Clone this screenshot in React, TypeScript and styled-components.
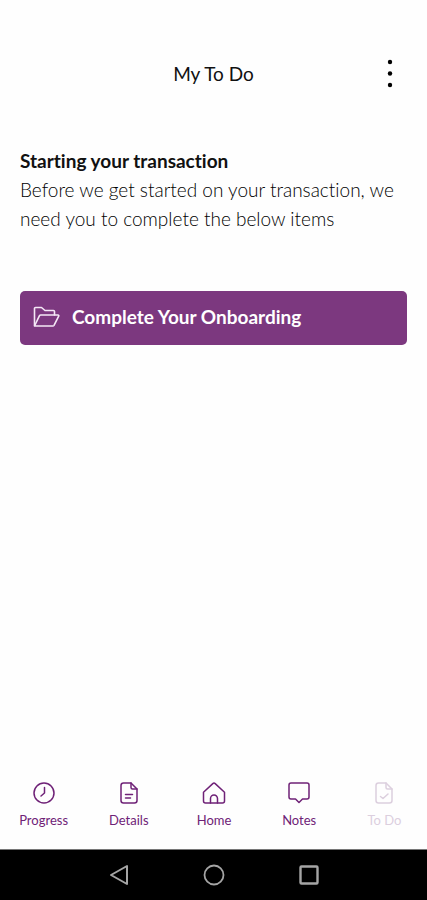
import type { ReactNode } from 'react';
import styled, { createGlobalStyle } from 'styled-components';

const GlobalStyle = createGlobalStyle`
  * { box-sizing: border-box; }
  body { margin: 0; background: #fefefe; }
  button { font: inherit; border: 0; cursor: pointer; }
`;

const Screen = styled.div`
  display: flex;
  flex-direction: column;
  min-height: 100vh;
  background: #fefefe;
  color: #111;
  font-family: Lato, sans-serif;
  font-variant-ligatures: none;
`;

const Header = styled.header`
  display: grid;
  grid-template-columns: 36px 1fr 36px;
  align-items: center;
  padding: 50px 19px 0;
`;

const Title = styled.h1`
  grid-column: 2;
  margin: 0;
  text-align: center;
  font-size: 19px;
  line-height: 48px;
  font-weight: 400;
`;

const MenuButton = styled.button`
  display: flex;
  justify-content: center;
  padding: 8px 0;
  background: none;
  color: #000;
`;

const Content = styled.main`
  display: flex;
  flex: 1;
  flex-direction: column;
  padding: 48px 20px 0;
`;

const Heading = styled.h2`
  margin: 0;
  font-size: 19px;
  line-height: 29px;
  font-weight: 700;
`;

const Message = styled.p`
  margin: 0;
  font-size: 19px;
  line-height: 29px;
  font-weight: 300;
  color: #000;
`;

const TaskButton = styled.button`
  display: flex;
  align-items: center;
  gap: 12px;
  height: 54px;
  margin-top: 58px;
  padding: 0 13px 2px;
  border-radius: 5px;
  background: #7c387f;
  color: #fff;
`;

const TaskLabel = styled.span`
  font-size: 19px;
  line-height: 24px;
  font-weight: 700;
`;

const TabBar = styled.nav`
  display: grid;
  grid-template-columns: repeat(5, 1fr);
  padding: 0 0 20px 1px;
`;

const Tab = styled.a<{ $muted?: boolean }>`
  display: flex;
  flex-direction: column;
  align-items: center;
  gap: 6px;
  color: ${({ $muted }) => ($muted ? '#dccfde' : '#6f2277')};
  font-size: 13px;
  line-height: 18px;
  text-decoration: none;
`;

const SystemBar = styled.footer`
  display: flex;
  justify-content: center;
  align-items: center;
  gap: 71px;
  height: 51px;
  border-top: 1px solid #777;
  background: #000;
`;

const SystemButton = styled.button`
  display: flex;
  padding: 0;
  background: none;
  color: #a5a5a5;
`;

const TabIcon = ({ children }: { children: ReactNode }) => (
  <svg width="24" height="24" viewBox="0 0 24 24" fill="none" stroke="currentColor" strokeWidth="1.5" strokeLinecap="round" strokeLinejoin="round" aria-hidden="true">
    {children}
  </svg>
);

const page = (
  <>
    <path d="M14 2H6.500A2.500 2.500 0 0 0 4 4.500v15A2.500 2.500 0 0 0 6.500 22h11a2.500 2.500 0 0 0 2.500-2.500V8z" />
    <path d="M14 2v4.500A1.500 1.500 0 0 0 15.500 8H20" />
  </>
);

const tabs: { label: string; icon: ReactNode; current?: boolean }[] = [
  { label: 'Progress', icon: <><circle cx="12" cy="12" r="10" /><path d="M12.500 6.500V12l-3.500 3" /></> },
  { label: 'Details', icon: <>{page}<path d="M8.500 13.500h7M8.500 17h5" /></> },
  { label: 'Home', icon: <><path d="M1.500 11.200 10.800 2.600a1.800 1.800 0 0 1 2.400 0l9.300 8.600V20a2 2 0 0 1-2 2h-17a2 2 0 0 1-2-2z" /><path d="M8.500 22v-4.500a3.500 3.500 0 0 1 7 0V22" /></> },
  { label: 'Notes', icon: <path d="M4 2h16a2 2 0 0 1 2 2v12a2 2 0 0 1-2 2h-4.500L12 21.500 8.500 18H4a2 2 0 0 1-2-2V4a2 2 0 0 1 2-2z" /> },
  { label: 'To Do', icon: <>{page}<path d="m8.500 15.500 2.500 2 5-4.500" /></>, current: true },
];

export default function App() {
  return (
    <Screen>
      <GlobalStyle />
      <Header>
        <Title>My To Do</Title>
        <MenuButton type="button" aria-label="More options">
          <svg width="8" height="32" viewBox="0 0 8 32" fill="currentColor" aria-hidden="true">
            <circle cx="4" cy="4" r="2.200" />
            <circle cx="4" cy="15.500" r="2.200" />
            <circle cx="4" cy="27" r="2.200" />
          </svg>
        </MenuButton>
      </Header>
      <Content>
        <Heading>Starting your transaction</Heading>
        <Message>Before we get started on your transaction, we need you to complete the below items</Message>
        <TaskButton type="button">
          <svg width="27" height="22" viewBox="0 0 27 22" fill="none" stroke="#f5e8f6" strokeWidth="1.600" strokeLinejoin="round" strokeLinecap="round" aria-hidden="true">
            <path d="M1.500 19.500V2.500a1 1 0 0 1 1-1H8.500L12 4.500h8.500a1 1 0 0 1 1 1V9" />
            <path d="M1.500 20 6.500 9.700a1.400 1.400 0 0 1 1.200-.7H25a.8.8 0 0 1 .7 1.200l-4.700 9.100a1.400 1.400 0 0 1-1.200.7z" />
          </svg>
          <TaskLabel>Complete Your Onboarding</TaskLabel>
        </TaskButton>
      </Content>
      <TabBar aria-label="Main">
        {tabs.map(({ label, icon, current }) => (
          <Tab key={label} href="#" $muted={current} aria-current={current ? 'page' : undefined}>
            <TabIcon>{icon}</TabIcon>
            {label}
          </Tab>
        ))}
      </TabBar>
      <SystemBar>
        <SystemButton type="button" aria-label="Back">
          <svg width="24" height="24" viewBox="0 0 24 24" fill="none" stroke="currentColor" strokeWidth="2" strokeLinejoin="round"><path d="M20 3v18L4 12z" /></svg>
        </SystemButton>
        <SystemButton type="button" aria-label="Home screen">
          <svg width="24" height="24" viewBox="0 0 24 24" fill="none" stroke="currentColor" strokeWidth="1.800"><circle cx="12" cy="12" r="9.500" /></svg>
        </SystemButton>
        <SystemButton type="button" aria-label="Recent apps">
          <svg width="24" height="24" viewBox="0 0 24 24" fill="none" stroke="currentColor" strokeWidth="2.400"><rect x="3.500" y="3.500" width="17" height="17" rx="1" /></svg>
        </SystemButton>
      </SystemBar>
    </Screen>
  );
}
